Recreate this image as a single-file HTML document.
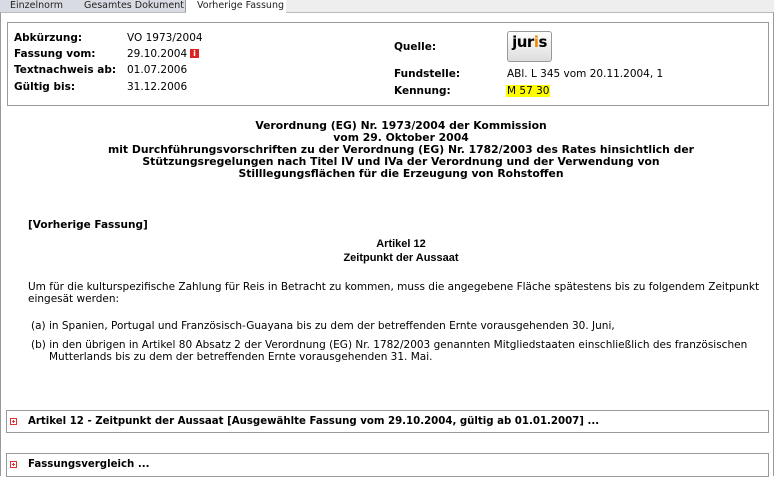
<!DOCTYPE html>
<html><head><meta charset="utf-8"><style>
*{margin:0;padding:0;box-sizing:border-box}
body{width:774px;height:476px;overflow:hidden;background:#fff;font-family:"DejaVu Sans","Liberation Sans",sans-serif;font-size:10.5px;color:#000;position:relative}
.a{position:absolute;white-space:nowrap;line-height:12px}
.b{font-weight:bold}
.tab{position:absolute;top:0;height:12px;font-size:9.5px;line-height:12px;padding-left:10px;color:#222}
.c{left:28px;right:0;text-align:center}
.t{font-size:10.8px}
.box{position:absolute;border:1px solid #999;background:#fff}
.plus{position:absolute;width:7px;height:7px;border:1px solid #d33;}
.plus:before{content:"";position:absolute;left:1px;top:2px;width:3px;height:1px;background:#d33}
.plus:after{content:"";position:absolute;left:2px;top:1px;width:1px;height:3px;background:#d33}
</style></head><body>
<div style="position:absolute;left:0;top:0;width:774px;height:12px;background:#eee"></div>
<div class="tab" style="left:0;width:76px;background:#d8dbe3;border-right:1px solid #999">Einzelnorm</div>
<div class="tab" style="left:74px;width:112px;background:#d8dbe3;border-right:1px solid #999">Gesamtes Dokument</div>
<div class="tab" style="left:186px;width:100px;background:#fff;padding-left:11px">Vorherige Fassung</div>
<div style="position:absolute;left:0;top:12px;width:774px;height:464px;border:1px solid #999;border-bottom:none;border-top:1px solid #bbb"></div>
<div style="position:absolute;left:186px;top:11px;width:100px;height:2px;background:#fff"></div>

<div class="box" style="left:7px;top:22px;width:762px;height:84px"></div>
<div class="a b" style="left:14px;top:32px">Abkürzung:</div><div class="a" style="left:127px;top:32px">VO 1973/2004</div>
<div class="a b" style="left:14px;top:48px">Fassung vom:</div><div class="a" style="left:127px;top:48px">29.10.2004</div>
<div style="position:absolute;left:190px;top:49px;width:9px;height:9px;background:#d22;color:#fff;font-size:8px;line-height:9px;text-align:center;font-weight:bold">i</div>
<div class="a b" style="left:14px;top:64px">Textnachweis ab:</div><div class="a" style="left:127px;top:64px">01.07.2006</div>
<div class="a b" style="left:14px;top:81px">Gültig bis:</div><div class="a" style="left:127px;top:81px">31.12.2006</div>
<div class="a b" style="left:394px;top:41px">Quelle:</div>
<div style="position:absolute;left:507px;top:31px;width:45px;height:31px;border:1px solid #999;border-radius:3px;background:linear-gradient(#fff,#ddd);font:900 15px 'DejaVu Sans',sans-serif;text-align:center;line-height:20px;letter-spacing:-0.5px">jur<span style="color:#e80">i</span>s</div>
<div class="a b" style="left:394px;top:68px">Fundstelle:</div><div class="a" style="left:507px;top:68px">ABl. L 345 vom 20.11.2004, 1</div>
<div class="a b" style="left:394px;top:85px">Kennung:</div><div class="a" style="left:506px;top:85px;background:#ff0;padding:0 1px">M 57 30</div>

<div class="a b c t" style="top:120px">Verordnung (EG) Nr. 1973/2004 der Kommission</div>
<div class="a b c t" style="top:132px">vom 29. Oktober 2004</div>
<div class="a b c t" style="top:144px">mit Durchführungsvorschriften zu der Verordnung (EG) Nr. 1782/2003 des Rates hinsichtlich der</div>
<div class="a b c t" style="top:156px">Stützungsregelungen nach Titel IV und IVa der Verordnung und der Verwendung von</div>
<div class="a b c t" style="top:168px">Stilllegungsflächen für die Erzeugung von Rohstoffen</div>

<div class="a b" style="left:28px;top:219px">[Vorherige Fassung]</div>
<div class="a b c" style="top:238px;font-family:'Liberation Sans',sans-serif;font-size:11px">Artikel 12</div>
<div class="a b c" style="top:252px;font-family:'Liberation Sans',sans-serif;font-size:11px">Zeitpunkt der Aussaat</div>

<div class="a" style="left:28px;top:281px">Um für die kulturspezifische Zahlung für Reis in Betracht zu kommen, muss die angegebene Fläche spätestens bis zu folgendem Zeitpunkt</div>
<div class="a" style="left:28px;top:293px">eingesät werden:</div>
<div class="a" style="left:31px;top:320px">(a)&nbsp;in Spanien, Portugal und Französisch-Guayana bis zu dem der betreffenden Ernte vorausgehenden 30. Juni,</div>
<div class="a" style="left:31px;top:339px">(b)&nbsp;in den übrigen in Artikel 80 Absatz 2 der Verordnung (EG) Nr. 1782/2003 genannten Mitgliedstaaten einschließlich des französischen</div>
<div class="a" style="left:49px;top:351px">Mutterlands bis zu dem der betreffenden Ernte vorausgehenden 31. Mai.</div>

<div class="box" style="left:6px;top:410px;width:763px;height:23px"></div>
<div class="plus" style="left:10px;top:418px"></div>
<div class="a b" style="left:28px;top:416px;font-size:10.2px">Artikel 12 - Zeitpunkt der Aussaat [Ausgewählte Fassung vom 29.10.2004, gültig ab 01.01.2007] ...</div>
<div class="box" style="left:6px;top:453px;width:763px;height:24px"></div>
<div class="plus" style="left:10px;top:461px"></div>
<div class="a b" style="left:28px;top:459px;font-size:10.2px">Fassungsvergleich ...</div>
</body></html>
